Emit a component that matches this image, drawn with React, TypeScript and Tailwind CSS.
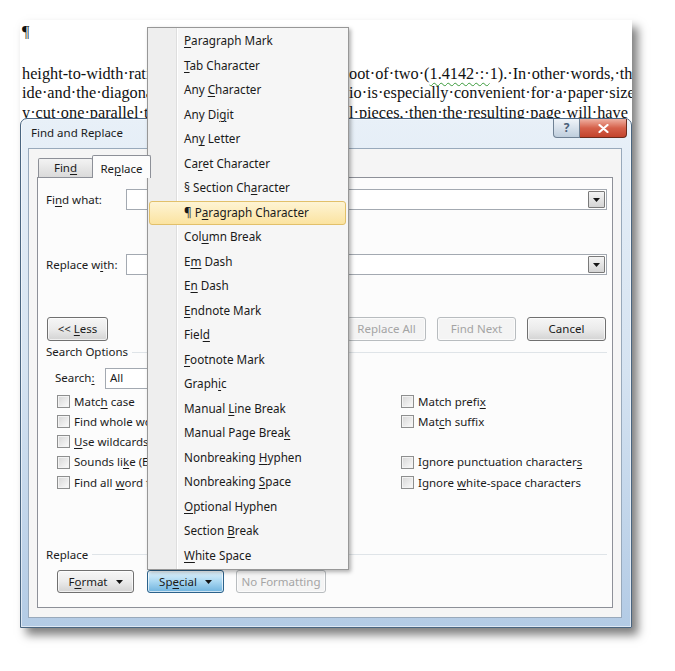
import React from 'react';

// Special menu entries: [label, index of the underlined access key]
const SPECIAL_ITEMS: [string, number][] = [
  ['Paragraph Mark', 0],
  ['Tab Character', 0],
  ['Any Character', 4],
  ['Any Digit', 6],
  ['Any Letter', 2],
  ['Caret Character', 2],
  ['§ Section Character', 12],
  ['¶ Paragraph Character', 3],
  ['Column Break', 3],
  ['Em Dash', 1],
  ['En Dash', 1],
  ['Endnote Mark', 0],
  ['Field', 4],
  ['Footnote Mark', 0],
  ['Graphic', 5],
  ['Manual Line Break', 7],
  ['Manual Page Break', 16],
  ['Nonbreaking Hyphen', 12],
  ['Nonbreaking Space', 12],
  ['Optional Hyphen', 0],
  ['Section Break', 8],
  ['White Space', 0],
];

const ACTIVE_ITEM = 7;

function AccessText({ text, u }: { text: string; u?: number }) {
  if (u === undefined) return <>{text}</>;
  return (
    <>
      {text.slice(0, u)}
      <span className="underline decoration-1 underline-offset-[2px]">{text.charAt(u)}</span>
      {text.slice(u + 1)}
    </>
  );
}

function Caret() {
  return (
    <svg width="7" height="4" viewBox="0 0 7 4" className="shrink-0">
      <path d="M0 0h7L3.5 4z" fill="#151515" />
    </svg>
  );
}

function Combo({ className, value }: { className: string; value?: string }) {
  return (
    <div className={`flex items-stretch border border-[#a3a9b1] bg-white ${className}`}>
      <div className="flex flex-1 items-center pl-[4px]">{value}</div>
      <div className="m-px flex w-[17px] items-center justify-center rounded-[1px] border border-[#7a7a7a] bg-linear-to-b from-[#f4f4f4] to-[#d4d4d4]">
        <Caret />
      </div>
    </div>
  );
}

type BtnKind = 'normal' | 'disabled' | 'pressed';

const BTN_STYLES: Record<BtnKind, string> = {
  normal: 'border-[#707070] bg-linear-to-b from-[#f6f6f6] via-[#ebebeb] to-[#d3d3d3] text-[#1a1a1a]',
  disabled: 'border-[#b8bcbf] bg-[#f4f4f4] text-[#a4a4a4]',
  pressed: 'border-[#2c628b] bg-linear-to-b from-[#e3f3fc] via-[#a9d7f1] to-[#6fb3de] text-[#1a1a1a]',
};

function Btn({
  kind = 'normal',
  className,
  children,
}: {
  kind?: BtnKind;
  className: string;
  children: React.ReactNode;
}) {
  return (
    <div
      className={`flex shrink-0 items-center justify-center gap-[8px] rounded-[3px] border shadow-[inset_0_0_0_1px_rgba(255,255,255,0.65)] ${BTN_STYLES[kind]} ${className}`}
    >
      {children}
    </div>
  );
}

function Check({ text, u }: { text: string; u?: number }) {
  return (
    <div className="flex h-[20.3px] items-center gap-[4px] whitespace-nowrap">
      <span className="h-[13px] w-[13px] shrink-0 border border-[#8e8f8f] bg-linear-to-br from-[#d6d6d6] to-[#fbfbfb] shadow-[inset_0_0_0_1px_#f3f3f3]" />
      <span>
        <AccessText text={text} u={u} />
      </span>
    </div>
  );
}

function GroupLabel({ text }: { text: string }) {
  return (
    <div className="flex h-[14px] items-center gap-[4px]">
      <span>{text}</span>
      <span className="h-px flex-1 bg-[#dfe4e8]" />
    </div>
  );
}

function DocLine({ left, right }: { left: string; right: React.ReactNode }) {
  return (
    <div className="flex h-[19.5px] items-center whitespace-nowrap">
      <div className="w-[327px] shrink-0 overflow-hidden">{left}</div>
      <div className="shrink-0">{right}</div>
    </div>
  );
}

function Document() {
  return (
    <div className="h-[98px] overflow-hidden pl-[2px] pt-[2px] font-['Liberation_Serif',serif] text-[16.3px] leading-[19.5px] text-[#111]">
      <div className="h-[19.5px]">¶</div>
      <div className="mt-[22px]">
        <DocLine
          left="height-to-width·ratio·of·all·pages·is·the·square·r"
          right={
            <>
              oot·of·two·(
              <span className="underline decoration-[#3a9a3a] decoration-wavy decoration-1 underline-offset-[3px]">
                1.4142·:·
              </span>
              1).·In·other·words,·the
            </>
          }
        />
        <DocLine
          left="ide·and·the·diagonal·of·a·square.·This·aspect·rat"
          right="io·is·especially·convenient·for·a·paper·size"
        />
        <DocLine
          left="y·cut·one·parallel·to·its·shorter·side·into·two·equa"
          right="l·pieces,·then·the·resulting·page·will·have"
        />
      </div>
    </div>
  );
}

function Dialog() {
  return (
    <div className="flex h-[510px] flex-col rounded-t-[7px] border border-[#4a6580] bg-linear-to-b from-[#e8f0f8] via-[#d5e3f1] to-[#b3cbe5] font-['Noto_Sans',sans-serif] text-[11.5px] text-[#1b1b1b] shadow-[inset_0_0_0_1px_rgba(255,255,255,0.55)]">
      {/* Title bar */}
      <div className="flex h-[29px] shrink-0 justify-between pl-[10px] pr-[4px]">
        <span className="pt-[5px] text-[11.5px]">Find and Replace</span>
        <div className="flex h-[19px]">
          <div className="flex w-[27px] items-center justify-center rounded-bl-[4px] border border-t-0 border-[#6f8194] bg-linear-to-b from-[#f0f4f9] to-[#bfcedd] text-[12px] font-bold leading-none text-[#4a6078]">
            ?
          </div>
          <div className="flex w-[47px] items-center justify-center rounded-br-[4px] border border-l-0 border-t-0 border-[#6b2a1c] bg-linear-to-b from-[#eeb0a2] via-[#d5604a] to-[#c2432c]">
            <svg width="11" height="9" viewBox="0 0 11 9">
              <path d="M1.5 1l8 7M9.5 1l-8 7" stroke="#fff" strokeWidth="2.2" strokeLinecap="round" />
            </svg>
          </div>
        </div>
      </div>

      {/* Client area */}
      <div className="mb-[9px] ml-[7px] mr-[9px] flex flex-1 flex-col border border-[#98a9bb] bg-[#f5f5f5] px-[8px] pb-[9px] pt-[6px]">
        <div className="flex h-[22px] shrink-0 items-end pl-px">
          <div className="flex h-[19px] w-[55px] items-center justify-center rounded-t-[2px] border border-b-0 border-[#8d9098] bg-linear-to-b from-[#f3f3f3] to-[#dadada]">
            <AccessText text="Find" u={3} />
          </div>
          <div className="relative z-10 -mb-px -ml-px flex h-[23px] w-[59px] items-start justify-center rounded-t-[2px] border border-b-0 border-[#8d9098] bg-[#fcfcfc] pt-[4px]">
            <AccessText text="Replace" u={2} />
          </div>
        </div>

        <div className="flex flex-1 flex-col border border-[#8d9098] bg-[#fcfcfc] pl-[8px] pr-[5px] pt-[11px]">
          <div className="flex h-[21px] items-center">
            <span className="w-[80px]">
              <AccessText text="Find what:" u={2} />
            </span>
            <Combo className="h-[21px] w-[481px]" />
          </div>
          <div className="mt-[44px] flex h-[21px] items-center">
            <span className="w-[80px]">
              <AccessText text="Replace with:" u={9} />
            </span>
            <Combo className="h-[21px] w-[481px]" />
          </div>

          <div className="mt-[42px] flex h-[24px] justify-between pl-px pr-px">
            <Btn className="w-[61px]">
              <span>
                &lt;&lt; <AccessText text="Less" u={0} />
              </span>
            </Btn>
            <div className="flex gap-[11px]">
              <Btn kind="disabled" className="w-[79px]">
                Replace
              </Btn>
              <Btn kind="disabled" className="w-[79px]">
                Replace All
              </Btn>
              <Btn kind="disabled" className="w-[79px]">
                Find Next
              </Btn>
              <Btn className="w-[79px]">Cancel</Btn>
            </div>
          </div>

          <div className="mt-[4px]">
            <GroupLabel text="Search Options" />
          </div>

          <div className="ml-[9px] mt-[9px] flex h-[20px] items-center">
            <span className="w-[50px]">
              <AccessText text="Search:" u={6} />
            </span>
            <Combo className="h-[21px] w-[117px]" value="All" />
          </div>

          <div className="ml-[11px] mt-[3px] flex">
            <div className="flex w-[344px] flex-col">
              <Check text="Match case" u={4} />
              <Check text="Find whole words only" u={19} />
              <Check text="Use wildcards" u={0} />
              <Check text="Sounds like (English)" u={9} />
              <Check text="Find all word forms (English)" u={9} />
            </div>
            <div className="flex flex-col">
              <Check text="Match prefix" u={11} />
              <Check text="Match suffix" u={3} />
              <div className="h-[20.3px]" />
              <Check text="Ignore punctuation characters" u={28} />
              <Check text="Ignore white-space characters" u={7} />
            </div>
          </div>

          <div className="mt-[55px]">
            <GroupLabel text="Replace" />
          </div>

          <div className="ml-[11px] mt-[9px] flex h-[23px]">
            <Btn className="w-[77px]">
              <span>
                <AccessText text="Format" u={1} />
              </span>
              <Caret />
            </Btn>
            <Btn kind="pressed" className="ml-[13px] w-[77px]">
              <span>
                <AccessText text="Special" u={2} />
              </span>
              <Caret />
            </Btn>
            <Btn kind="disabled" className="ml-[12px] w-[90px]">
              No Formatting
            </Btn>
          </div>
        </div>
      </div>
    </div>
  );
}

function SpecialMenu() {
  return (
    <div className="absolute left-[127px] top-[7px] w-[202px] border border-[#979797] bg-[linear-gradient(to_right,#eeeeee_0,#eeeeee_28px,#dedede_28px,#dedede_29px,#ffffff_29px,#ffffff_30px,#f6f6f6_30px)] py-px font-['Noto_Sans',sans-serif] text-[11.7px] text-[#1a1a1a] shadow-[2px_2px_4px_rgba(0,0,0,0.3)]">
      {SPECIAL_ITEMS.map(([text, u], i) => (
        <div
          key={text}
          className={`ml-px mr-[2px] flex h-[24.5px] items-center rounded-[3px] border pl-[34px] ${
            i === ACTIVE_ITEM
              ? 'border-[#e2c06a] bg-linear-to-b from-[#fef4d4] to-[#fbe3a0]'
              : 'border-transparent'
          }`}
        >
          <span>
            <AccessText text={text} u={u} />
          </span>
        </div>
      ))}
    </div>
  );
}

export default function App() {
  return (
    <div className="h-[671px] w-[675px] overflow-hidden bg-white pl-[20px] pt-[20px]">
      <div className="relative h-[608px] w-[612px] bg-white shadow-[6px_7px_9px_rgba(0,0,0,0.5)]">
        <Document />
        <Dialog />
        <SpecialMenu />
      </div>
    </div>
  );
}
